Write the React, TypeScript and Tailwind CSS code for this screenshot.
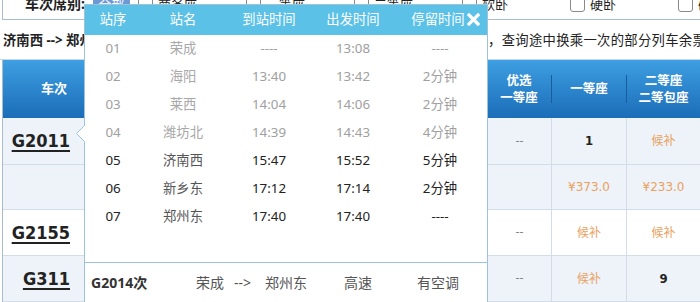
import React from "react";

type Stop = [string, string, string, string, string];

const passed: Stop[] = [
  ["01", "荣成", "----", "13:08", "----"],
  ["02", "海阳", "13:40", "13:42", "2分钟"],
  ["03", "莱西", "14:04", "14:06", "2分钟"],
  ["04", "潍坊北", "14:39", "14:43", "4分钟"],
];
const upcoming: Stop[] = [
  ["05", "济南西", "15:47", "15:52", "5分钟"],
  ["06", "新乡东", "17:12", "17:14", "2分钟"],
  ["07", "郑州东", "17:40", "17:40", "----"],
];

const seatTypes = ["商务座", "一等座", "二等座", "软卧", "硬卧", "硬座"];

function Checkbox() {
  return <span className="inline-block w-[15px] h-[15px] shrink-0 rounded-[3px] border border-[#8a8a8a] bg-white" />;
}

function TrainNo({ no }: { no: string }) {
  return (
    <span className="font-['DejaVu_Sans_Condensed','DejaVu_Sans',sans-serif] font-bold text-[18px] leading-none text-[#222] underline decoration-2 underline-offset-[3px]">
      {no}
    </span>
  );
}

function Row({
  h,
  bg,
  train,
  c1,
  c2,
  c3,
}: {
  h: string;
  bg: string;
  train?: string;
  c1: React.ReactNode;
  c2: React.ReactNode;
  c3: React.ReactNode;
}) {
  return (
    <div className={`flex ${h} ${bg} border-b border-[#d3dde9]`}>
      <div className="w-[81px] flex items-center justify-end pr-[14px]">{train ? <TrainNo no={train} /> : null}</div>
      <div className="w-[403px]" />
      <div className="w-[64px] border-l border-[#d3dde9] flex items-center justify-center">{c1}</div>
      <div className="w-[75px] border-l border-[#d3dde9] flex items-center justify-center">{c2}</div>
      <div className="w-[74px] border-l border-[#d3dde9] flex items-center justify-center">{c3}</div>
    </div>
  );
}

const dash = <span className="font-['DejaVu_Sans',sans-serif] text-[11px] text-[#777]">--</span>;
const wait = <span className="text-[12px] text-[#e9a260]">候补</span>;
const price = (p: string) => (
  <span className="font-['DejaVu_Sans',sans-serif] text-[12px] text-[#e9a260]">{p}</span>
);
const num = (n: string) => (
  <span className="font-['DejaVu_Sans_Condensed','DejaVu_Sans',sans-serif] font-bold text-[13px] text-[#222]">{n}</span>
);

const colW = ["w-[56px]", "w-[84px]", "w-[88px]", "w-[80px]", "w-[94px]"];

function StopRow({ s, done }: { s: Stop; done: boolean }) {
  const main = done ? "text-[#a0a0a0]" : "text-[#222]";
  const name = done ? "text-[#a8a8a8]" : "text-[#555]";
  return (
    <div className="flex h-[28px] items-center text-[13.33px]">
      <div className={`${colW[0]} text-center ${main}`}>{s[0]}</div>
      <div className={`${colW[1]} text-center ${name}`}>{s[1]}</div>
      <div className={`${colW[2]} text-center ${main}`}>{s[2]}</div>
      <div className={`${colW[3]} text-center ${main}`}>{s[3]}</div>
      <div className={`${colW[4]} text-center ${main}`}>{s[4]}</div>
    </div>
  );
}

export default function App() {
  return (
    <div className="relative w-[700px] h-[302px] overflow-hidden bg-white font-['Noto_Sans','Noto_Sans_CJK_SC',sans-serif] text-[#222]">
      {/* toolbar */}
      <div className="ml-[2px] h-[20px] border-l border-b border-[#a9bccd] flex items-center pb-[11px] pl-[22px] whitespace-nowrap">
        <span className="w-[68px] shrink-0 font-bold text-[14px] leading-[16px]">车次席别:</span>
        <span className="w-[37px] shrink-0 bg-[#6e98d4] text-white text-[13px] leading-[16px] text-center">全部</span>
        <div className="ml-[8px] flex">
          {seatTypes.map((t) => (
            <div key={t} className="w-[108px] shrink-0 flex items-center gap-[5px] text-[13px] leading-[16px]">
              <Checkbox />
              <span>{t}</span>
            </div>
          ))}
        </div>
      </div>

      {/* info line */}
      <div className="h-[40px] border-b border-[#c5d8e8] flex items-center pt-[3px] whitespace-nowrap">
        <div className="w-[84px] shrink-0 overflow-hidden pl-[3px] font-bold text-[13.33px]">济南西 --&gt; 郑州东</div>
        <div className="w-[404px] shrink-0" />
        <div className="text-[13.33px] tracking-[0.3px] text-[#222]">，查询途中换乘一次的部分列车余票</div>
      </div>

      {/* table */}
      <div className="ml-[2px] w-[698px] border-l border-[#a9bccd]">
        <div className="flex h-[58px] bg-gradient-to-b from-[#3e9fe2] to-[#1b6db8] text-white">
          <div className="w-[81px] flex items-center justify-end pr-[17px] text-[13px] font-bold">车次</div>
          <div className="w-[403px]" />
          <div className="w-[64px] flex items-center justify-center text-center text-[12.5px] font-bold leading-[17px]">
            优选<br />一等座
          </div>
          <div className="w-[75px] flex items-center">
            <span className="w-px h-[28px] bg-[#1b5d9c]" />
            <span className="flex-1 text-center text-[12.5px] font-bold">一等座</span>
          </div>
          <div className="w-[74px] flex items-center">
            <span className="w-px h-[28px] bg-[#1b5d9c]" />
            <span className="flex-1 text-center text-[12.5px] font-bold leading-[17px]">
              二等座<br />二等包座
            </span>
          </div>
        </div>
        <Row h="h-[47px]" bg="bg-[#eef2f9]" train="G2011" c1={dash} c2={num("1")} c3={wait} />
        <Row h="h-[45px]" bg="bg-[#eef2f9]" c1={null} c2={price("¥373.0")} c3={price("¥233.0")} />
        <Row h="h-[46px]" bg="bg-white" train="G2155" c1={dash} c2={wait} c3={wait} />
        <Row h="h-[46px]" bg="bg-[#eef2f9]" train="G311" c1={dash} c2={wait} c3={num("9")} />
      </div>

      {/* popup */}
      <div className="absolute left-[84px] top-[4px] w-[404px] h-[320px] border border-[#9cc3d9] bg-white">
        <div className="flex h-[30px] items-center bg-[#5cc1e6] text-white text-[13.33px]">
          <div className={`${colW[0]} text-center`}>站序</div>
          <div className={`${colW[1]} text-center`}>站名</div>
          <div className={`${colW[2]} text-center`}>到站时间</div>
          <div className={`${colW[3]} text-center`}>出发时间</div>
          <div className={`${colW[4]} text-center pr-[4px]`}>停留时间</div>
        </div>
        <svg className="absolute left-[382px] top-[8px]" width="13" height="13" viewBox="0 0 13 13">
          <path d="M2 2 L11 11 M11 2 L2 11" stroke="#ffffff" strokeWidth="3.2" strokeLinecap="square" />
        </svg>
        {passed.map((s) => (
          <StopRow key={s[0]} s={s} done />
        ))}
        {upcoming.map((s) => (
          <StopRow key={s[0]} s={s} done={false} />
        ))}
        <div className="h-[31px]" />
        <div className="h-[40px] border-t border-[#9cc3d9] flex items-center pl-[6px] text-[14px] text-[#555] whitespace-nowrap">
          <span className="w-[105px] shrink-0 font-bold text-[#333]">G2014次</span>
          <span className="w-[38px] shrink-0">荣成</span>
          <span className="w-[31px] shrink-0">--&gt;</span>
          <span className="w-[79px] shrink-0">郑州东</span>
          <span className="w-[73px] shrink-0">高速</span>
          <span>有空调</span>
        </div>
      </div>
      <svg className="absolute left-[76px] top-[125px]" width="10" height="18" viewBox="0 0 10 18">
        <polygon points="10,0.5 8.5,0.5 0.5,8.5 8.5,16.5 10,16.5" fill="#ffffff" />
        <polyline points="8.5,0.5 0.5,8.5 8.5,16.5" fill="none" stroke="#9cc3d9" strokeWidth="1" />
      </svg>
    </div>
  );
}
